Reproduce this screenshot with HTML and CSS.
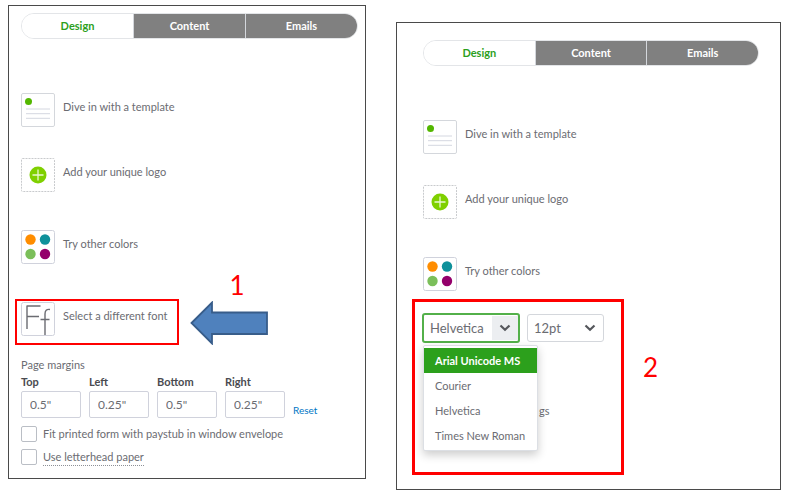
FILE: index.html
```html
<!DOCTYPE html>
<html lang="en">
<head>
    <meta charset="utf-8">
    <title>Customize Form Style</title>
    <link rel="stylesheet" href="styles.css">
</head>
<body>
    <!-- icons used by both panels -->
    <svg class="sprite" aria-hidden="true">
        <symbol id="icon-template" viewBox="0 0 34 34">
            <rect x="0.5" y="0.5" width="33" height="33" rx="1.5" fill="#fff" stroke="#d4d7dc"/>
            <circle cx="7.5" cy="8.5" r="3.5" fill="#53b700"/>
            <path d="M5 16h24M5 20.700h24M5 25.300h24" stroke="#d4d7e0"/>
        </symbol>
        <symbol id="icon-logo" viewBox="0 0 34 34">
            <rect x="0.5" y="0.5" width="33" height="33" rx="1" fill="#fff" stroke="#c8cacd" stroke-dasharray="2 1"/>
            <circle cx="17" cy="17" r="8.500" fill="#7fd000"/>
            <path d="M17 11.500v11M11.500 17h11" stroke="#e9f9cf" stroke-width="1.300"/>
        </symbol>
        <symbol id="icon-colors" viewBox="0 0 34 34">
            <rect x="0.500" y="0.500" width="33" height="33" rx="2" fill="#fff" stroke="#d0d2dc"/>
            <circle cx="9.500" cy="9.500" r="5.200" fill="#ff8d00"/>
            <circle cx="24" cy="9.500" r="5.200" fill="#0f919b"/>
            <circle cx="9.500" cy="24" r="5.200" fill="#7bbf5a"/>
            <circle cx="24" cy="24" r="5.200" fill="#94006b"/>
        </symbol>
        <symbol id="icon-font" viewBox="0 0 34 34">
            <rect x="0.500" y="0.500" width="33" height="33" rx="2" fill="#fff" stroke="#d0d2dc"/>
            <path d="M6 27V4M5.500 4H19.500M6 14.500H18" fill="none" stroke="#6b6c72" stroke-width="1.400"/>
            <path d="M29 7.500C25.500 7 24 8.500 24 12V33M19.500 17.500H28.500" fill="none" stroke="#6b6c72" stroke-width="1.400"/>
        </symbol>
        <symbol id="icon-chevron" viewBox="0 0 12 8">
            <path d="M1.500 1.500L6 5.700L10.500 1.500" fill="none" stroke="#55575c" stroke-width="2.200"/>
        </symbol>
    </svg>

    <main class="steps">
        <section class="panel panel-first">
            <nav class="tabs">
                <button type="button" class="tab active">Design</button>
                <button type="button" class="tab">Content</button>
                <button type="button" class="tab">Emails</button>
            </nav>

            <button type="button" class="option"><svg class="icon"><use href="#icon-template"/></svg><span>Dive in with a template</span></button>
            <button type="button" class="option option-logo"><svg class="icon"><use href="#icon-logo"/></svg><span>Add your unique logo</span></button>
            <button type="button" class="option"><svg class="icon"><use href="#icon-colors"/></svg><span>Try other colors</span></button>

            <div class="font-row">
                <div class="highlight">
                    <button type="button" class="option"><svg class="icon"><use href="#icon-font"/></svg><span>Select a different font</span></button>
                </div>
                <div class="pointer">
                    <span class="step-number">1</span>
                    <svg class="arrow" viewBox="0 0 78 44" aria-hidden="true">
                        <path d="M1.500 22L22 1.500V11.500H77V33H22V42.500Z" fill="#4f81bd" stroke="#385d8a" stroke-width="1.800"/>
                    </svg>
                </div>
            </div>

            <form>
                <div class="margins-title">Page margins</div>
                <div class="margins">
                    <label class="field" for="top">Top<input type="text" id="top" value='0.5"'></label>
                    <label class="field" for="left">Left<input type="text" id="left" value='0.25"'></label>
                    <label class="field" for="bottom">Bottom<input type="text" id="bottom" value='0.5"'></label>
                    <label class="field" for="right">Right<input type="text" id="right" value='0.25"'></label>
                    <a href="#" class="reset">Reset</a>
                </div>
                <div class="check">
                    <input type="checkbox" id="paystub">
                    <label for="paystub">Fit printed form with paystub in window envelope</label>
                </div>
                <div class="check">
                    <input type="checkbox" id="letterhead">
                    <label for="letterhead" class="hint">Use letterhead paper</label>
                </div>
            </form>
        </section>

        <section class="panel panel-second">
            <nav class="tabs">
                <button type="button" class="tab active">Design</button>
                <button type="button" class="tab">Content</button>
                <button type="button" class="tab">Emails</button>
            </nav>

            <button type="button" class="option"><svg class="icon"><use href="#icon-template"/></svg><span>Dive in with a template</span></button>
            <button type="button" class="option option-logo"><svg class="icon"><use href="#icon-logo"/></svg><span>Add your unique logo</span></button>
            <button type="button" class="option"><svg class="icon"><use href="#icon-colors"/></svg><span>Try other colors</span></button>

            <div class="picker-row">
                <div class="picker">
                    <div class="selects">
                        <div class="select select-font">
                            <select aria-label="Font">
                                <option>Helvetica</option>
                                <option>Arial Unicode MS</option>
                                <option>Courier</option>
                                <option>Times New Roman</option>
                            </select>
                            <span class="select-arrow"><svg class="chevron"><use href="#icon-chevron"/></svg></span>
                            <ul class="menu" role="listbox" aria-label="Font list">
                                <li class="selected" role="option">Arial Unicode MS</li>
                                <li role="option">Courier</li>
                                <li role="option">Helvetica</li>
                                <li role="option">Times New Roman</li>
                            </ul>
                        </div>
                        <div class="select select-size">
                            <select aria-label="Font size">
                                <option>12pt</option>
                            </select>
                            <span class="select-arrow"><svg class="chevron"><use href="#icon-chevron"/></svg></span>
                        </div>
                    </div>
                    <div class="settings">gs</div>
                </div>
                <span class="step-number">2</span>
            </div>
        </section>
    </main>
</body>
</html>
```

FILE: styles.css
```css
* {
    box-sizing: border-box;
}

body {
    margin: 0;
    background-color: #fff;
    color: #6b6c72;
    font-family: Lato, sans-serif;
    font-size: 11px;
    line-height: 16px;
}

button,
input,
select {
    font: inherit;
    color: inherit;
}

.sprite {
    display: block;
    width: 0;
    height: 0;
}

.steps {
    display: grid;
    grid-template-columns: 358fr 385fr;
    gap: 30px;
    align-items: start;
    padding: 5px 9px 12px 8px;
}

.panel {
    border: 1px solid #4a4a4a;
}

.panel-first {
    padding: 7px 7px 5px 12px;
}

.panel-second {
    margin-top: 17px;
    padding: 17px 21px 14px 26px;
}

/* tabs */
.tabs {
    display: flex;
    height: 26px;
    margin-bottom: 54px;
    border: 1px solid #e3e5e8;
    border-radius: 13px;
    overflow: hidden;
}

.tab {
    flex: 1;
    padding: 0;
    border: none;
    border-left: 1px solid #d4d7dc;
    background-color: #808080;
    color: #fff;
    font-weight: bold;
    cursor: pointer;
}

.tab.active {
    border-left: none;
    background-color: #fff;
    color: #2ca01c;
}

/* design options */
.option {
    display: flex;
    gap: 8px;
    margin: 0 0 31px;
    padding: 0;
    border: none;
    background: none;
    line-height: 28px;
    white-space: nowrap;
    cursor: pointer;
}

.option-logo {
    margin-bottom: 38px;
}

.icon {
    width: 34px;
    height: 34px;
}

.font-row {
    display: flex;
    align-items: flex-end;
    gap: 11px;
    margin: 35px 0 12px -6px;
}

.highlight {
    width: 164px;
    padding: 1px 4px 7px;
    border: 2px solid #f00;
}

.highlight .option {
    margin: 0;
}

.pointer {
    display: flex;
    flex-direction: column;
    align-items: center;
    width: 78px;
    margin-top: -33px;
}

.step-number {
    color: #f00;
    font-size: 26px;
    line-height: 32px;
}

.pointer .step-number {
    margin-left: 16px;
}

.arrow {
    width: 78px;
    height: 44px;
}

/* page margins */
.margins {
    display: flex;
    gap: 8px;
    margin-bottom: 8px;
}

.field {
    width: 60px;
    color: #4a4b50;
    font-weight: bold;
    line-height: 18px;
}

.field input {
    display: block;
    width: 100%;
    height: 27px;
    padding: 0 8px;
    border: 1px solid #d0d2dc;
    border-radius: 2px;
    color: #6b6c72;
    font-size: 12px;
    font-weight: normal;
}

.reset {
    align-self: flex-end;
    color: #0077c5;
    font-size: 10px;
    text-decoration: none;
}

.check {
    display: flex;
    gap: 6px;
    margin-bottom: 7px;
}

.check input {
    appearance: none;
    width: 16px;
    height: 16px;
    margin: 0;
    border: 1px solid #babec5;
    border-radius: 2px;
}

.hint {
    border-bottom: 1px dotted #8d9096;
}

/* font picker */
.picker-row {
    display: flex;
    align-items: center;
    gap: 19px;
    margin: -23px 0 0 -11px;
}

.picker {
    width: 212px;
    height: 176px;
    padding: 11px 7px;
    border: 3px solid #f00;
}

.picker-row .step-number {
    margin-bottom: 40px;
}

.selects {
    display: flex;
    align-items: center;
    gap: 7px;
}

.select {
    display: flex;
    position: relative;
    border: 1px solid #d4d7dc;
    border-radius: 3px;
    font-size: 13px;
}

.select-font {
    width: 98px;
    height: 30px;
    border: 2px solid #53b04a;
}

.select-size {
    width: 77px;
    height: 28px;
}

.select select {
    appearance: none;
    width: 100%;
    padding: 0 6px;
    border: none;
    background: none;
    cursor: pointer;
}

.select-arrow {
    display: flex;
    position: absolute;
    top: 1px;
    right: 0;
    bottom: 1px;
    width: 26px;
    align-items: center;
    justify-content: center;
    pointer-events: none;
}

.select-font .select-arrow {
    background-color: #eceef1;
}

.chevron {
    width: 12px;
    height: 8px;
}

.menu {
    position: absolute;
    top: 30px;
    left: -1px;
    width: 115px;
    margin: 0;
    padding: 2px 0;
    border: 1px solid #dcdfe4;
    border-radius: 2px;
    background-color: #fff;
    box-shadow: 0 4px 10px rgba(0, 0, 0, 0.2);
    font-size: 11px;
    line-height: 25px;
    list-style: none;
    white-space: nowrap;
}

.menu li {
    padding: 0 11px;
}

.menu .selected {
    background-color: #2ca01c;
    color: #fff;
    font-weight: bold;
}

.settings {
    margin: 60px 0 0 117px;
}
```
